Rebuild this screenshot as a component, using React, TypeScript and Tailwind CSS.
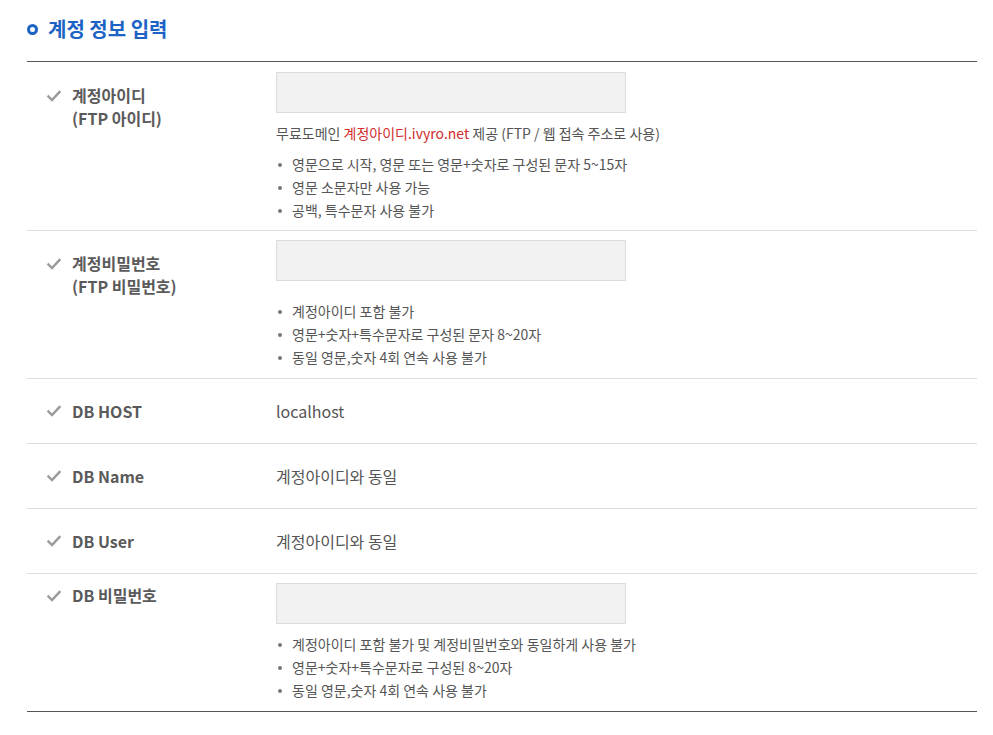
import React from 'react'

const font = { fontFamily: '"Noto Sans CJK KR", "Noto Sans", sans-serif' }

const Check = () => (
  <svg width="14" height="12" viewBox="0 0 14 12" className="shrink-0">
    <path d="M1.5 6.5 L5 10 L12.5 2" fill="none" stroke="#9a9a9a" strokeWidth="2.4" strokeLinecap="square" />
  </svg>
)

const Bullets = ({ items, className = '' }: { items: string[]; className?: string }) => (
  <ul className={`text-[14px] leading-[23px] text-[#555] ${className}`}>
    {items.map(t => (
      <li key={t} className="flex items-center">
        <span className="w-[4px] h-[4px] rounded-full bg-[#777] ml-[2px] mr-[10px]" />
        {t}
      </li>
    ))}
  </ul>
)

const Label = ({ lines, pt }: { lines: string[]; pt?: string }) => (
  <div className={`w-[249px] shrink-0 flex ${pt ? `items-start ${pt}` : 'items-center'} pl-[20px]`}>
    <div className={`w-[25px] flex ${pt ? 'pt-[6px]' : ''}`}>
      <Check />
    </div>
    <div className="text-[16px] leading-[23px] font-bold text-[#5a5a5a]">
      {lines.map(l => (
        <div key={l}>{l}</div>
      ))}
    </div>
  </div>
)

const Input = () => <div className="w-[350px] h-[41px] bg-[#f2f2f2] border border-[#dcdcdc]" />

export default function App() {
  return (
    <div className="bg-white pl-[27px] pr-[16px] pt-[15px] pb-[20px]" style={font}>
      <h2 className="flex items-center gap-[10px] h-[28px] text-[20px] font-bold text-[#1c63c5]">
        <span className="w-[11px] h-[11px] rounded-full border-[3px] border-[#1c63c5]" />
        계정 정보 입력
      </h2>
      <div className="mt-[18px] border-t border-b border-[#555]">
        {/* 계정아이디 */}
        <div className="flex pt-[10px] pb-[8px] border-b border-[#ddd]">
          <Label lines={['계정아이디', '(FTP 아이디)']} pt="pt-[12px]" />
          <div>
            <Input />
            <p className="mt-[9px] text-[14px] leading-[23px] text-[#555]">
              무료도메인 <span className="text-[#d12b2b]">계정아이디.ivyro.net</span> 제공 (FTP / 웹 접속 주소로 사용)
            </p>
            <Bullets
              className="mt-[8px]"
              items={['영문으로 시작, 영문 또는 영문+숫자로 구성된 문자 5~15자', '영문 소문자만 사용 가능', '공백, 특수문자 사용 불가']}
            />
          </div>
        </div>
        {/* 계정비밀번호 */}
        <div className="flex pt-[9px] pb-[9px] border-b border-[#ddd]">
          <Label lines={['계정비밀번호', '(FTP 비밀번호)']} pt="pt-[12px]" />
          <div>
            <Input />
            <Bullets
              className="mt-[19px]"
              items={['계정아이디 포함 불가', '영문+숫자+특수문자로 구성된 문자 8~20자', '동일 영문,숫자 4회 연속 사용 불가']}
            />
          </div>
        </div>
        {[
          ['DB HOST', 'localhost'],
          ['DB Name', '계정아이디와 동일'],
          ['DB User', '계정아이디와 동일'],
        ].map(([k, v]) => (
          <div key={k} className="flex h-[65px] border-b border-[#ddd]">
            <Label lines={[k]} />
            <div className="flex items-center text-[16px] text-[#555]">{v}</div>
          </div>
        ))}
        {/* DB 비밀번호 */}
        <div className="flex pt-[9px] pb-[9px]">
          <Label lines={['DB 비밀번호']} pt="pt-[1px]" />
          <div>
            <Input />
            <Bullets
              className="mt-[9px]"
              items={['계정아이디 포함 불가 및 계정비밀번호와 동일하게 사용 불가', '영문+숫자+특수문자로 구성된 8~20자', '동일 영문,숫자 4회 연속 사용 불가']}
            />
          </div>
        </div>
      </div>
    </div>
  )
}
